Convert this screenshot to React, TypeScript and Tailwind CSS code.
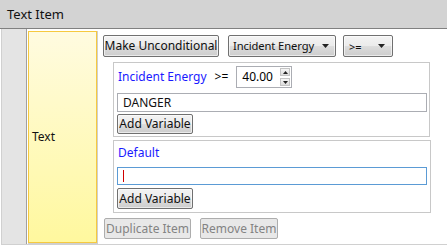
import React from "react";

const btn =
  "flex items-center justify-center whitespace-nowrap border border-[#707070] rounded-[2px] bg-[linear-gradient(#f3f3f3_0%,#ebebeb_50%,#dddddd_50%,#cdcdcd_100%)] shadow-[inset_0_0_0_1px_rgba(255,255,255,0.6)] text-[#101010]";

const disabledBtn =
  "flex items-center justify-center whitespace-nowrap border border-[#adadad] rounded-[2px] bg-[#e8e8e8] text-[#838383]";

function Caret() {
  return (
    <svg width="7" height="4" viewBox="0 0 7 4" className="shrink-0">
      <path d="M0 0 H7 L3.5 4 Z" fill="#222" />
    </svg>
  );
}

function SmallArrow({ up }: { up?: boolean }) {
  return (
    <svg width="5" height="3" viewBox="0 0 5 3">
      <path d={up ? "M0 3 H5 L2.5 0 Z" : "M0 0 H5 L2.5 3 Z"} fill="#222" />
    </svg>
  );
}

export default function App() {
  return (
    <div className="w-[447px] h-[245px] bg-white overflow-hidden font-['Noto_Sans',sans-serif] text-[12px] text-black leading-none">
      <div className="h-[29px] bg-[#d3d3d3] border-b border-[#808080] flex items-center pl-[7px] text-[13px] text-[#111]">
        Text Item
      </div>
      <div className="flex h-[216px] ml-[1px] border-l border-[#808080] border-b border-[#d0d0d0]">
        <div className="w-[25px] bg-[#e4e4e4] border-r border-[#a0a0a0]" />
        <div className="pl-[1px] pt-[2px]">
          <div className="w-[70px] h-full border-r border-b border-[#cfcfcf]">
            <div className="h-full border border-[#f6c940] bg-[linear-gradient(#fffbe0,#fff89e)] flex items-center pl-[3px] text-[#111]">
              Text
            </div>
          </div>
        </div>
        <div className="flex flex-col pl-[5px] pt-[6px]">
          <div className="flex h-[22px]">
            <div className={`${btn} w-[116px] h-[22px]`}>Make Unconditional</div>
            <div className={`${btn} ml-[9px] w-[108px] h-[22px] !justify-between pl-[4px] pr-[6px]`}>
              <span className="text-[11.2px] tracking-[-0.1px]">Incident Energy</span>
              <Caret />
            </div>
            <div className={`${btn} ml-[7px] w-[50px] h-[22px] !justify-between pl-[5px] pr-[7px]`}>
              <span className="text-[11px]">&gt;=</span>
              <Caret />
            </div>
          </div>

          <div className="ml-[10px] mt-[5px] w-[317px] border border-[#c8c8c8] px-[3px] pt-[3px] pb-[2px] flex flex-col">
            <div className="flex items-center h-[22px]">
              <span className="ml-[1px] text-[#1a1aff]">Incident Energy</span>
              <span className="ml-[8px]">&gt;=</span>
              <div className="ml-[8px] w-[56px] h-[22px] border border-[#abadb3] flex items-center justify-between pl-[5px] pr-[1px]">
                <span>40.00</span>
                <div className="flex flex-col gap-[2px]">
                  <div className="w-[10px] h-[8px] border border-[#c4c4c4] bg-[linear-gradient(#f6f6f6,#dcdcdc)] flex items-center justify-center">
                    <SmallArrow up />
                  </div>
                  <div className="w-[10px] h-[8px] border border-[#c4c4c4] bg-[linear-gradient(#f6f6f6,#dcdcdc)] flex items-center justify-center">
                    <SmallArrow />
                  </div>
                </div>
              </div>
            </div>
            <div className="mt-[5px] w-[310px] h-[19px] border border-[#abadb3] flex items-center pl-[5px] text-[#111]">
              DANGER
            </div>
            <div className={`${btn} mt-[2px] w-[76px] h-[20px]`}>Add Variable</div>
          </div>

          <div className="ml-[10px] mt-[3px] w-[318px] border border-[#c8c8c8] px-[3px] pt-[1px] pb-[3px] flex flex-col">
            <div className="h-[22px] flex items-center pl-[1px] text-[#1a1aff]">Default</div>
            <div className="mt-[3px] w-[310px] h-[18px] border border-[#5b9bd5] flex items-center pl-[5px]">
              <div className="w-[1px] h-[12px] bg-[#d00000]" />
            </div>
            <div className={`${btn} mt-[3px] w-[76px] h-[21px]`}>Add Variable</div>
          </div>

          <div className="flex mt-[5px] ml-[1px]">
            <div className={`${disabledBtn} w-[87px] h-[21px]`}>Duplicate Item</div>
            <div className={`${disabledBtn} ml-[9px] w-[78px] h-[21px]`}>Remove Item</div>
          </div>
        </div>
      </div>
    </div>
  );
}
